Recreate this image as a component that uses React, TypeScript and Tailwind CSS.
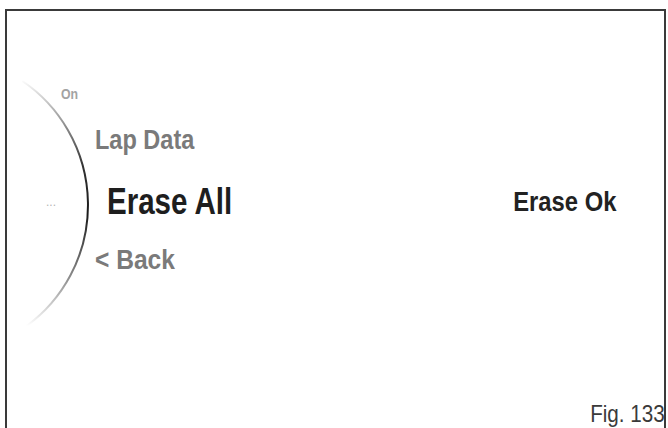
import React from 'react';

const narrow = "font-['Liberation_Sans',Arial,sans-serif]";

// curved selector rail on the left edge of the screen
const MenuArc = () => (
  <svg className="absolute left-0 top-0 pointer-events-none" width="120" height="360" viewBox="0 0 120 360">
    <defs>
      <linearGradient id="arcFade" gradientUnits="userSpaceOnUse" x1="0" y1="68" x2="0" y2="315">
        <stop offset="0" stopColor="#ffffff" />
        <stop offset="0.12" stopColor="#b5b5b5" />
        <stop offset="0.35" stopColor="#333333" />
        <stop offset="0.55" stopColor="#1a1a1a" />
        <stop offset="0.8" stopColor="#8a8a8a" />
        <stop offset="1" stopColor="#ffffff" />
      </linearGradient>
    </defs>
    <path d="M 15.4 70 A 150 150 0 0 1 19.6 315" fill="none" stroke="url(#arcFade)" strokeWidth="2" />
  </svg>
);

export default function App() {
  return (
    <div className="w-[668px] h-[428px] bg-white overflow-hidden pt-[9px] pl-[5px]">
      <div className="relative w-[661px] h-[419px] border-t-2 border-x-2 border-[#3a3a3a] flex flex-col">
        <MenuArc />

        <div className={`flex flex-col items-start pt-[75px] ${narrow} font-bold`}>
          <span className="inline-block origin-left scale-x-[0.82] ml-[54px] text-[15px] leading-none text-[#a3a3a3]">On</span>
          <span className="inline-block origin-left scale-x-[0.84] ml-[88px] mt-[25px] text-[28px] leading-none text-[#7a7a7a]">Lap Data</span>

          <div className="relative w-full mt-[30px] flex items-center justify-between pr-[48px]">
            <span className="absolute left-[39px] top-[12px] text-[12px] leading-none font-normal text-[#b5b5b5]">...</span>
            <span className="inline-block origin-left scale-x-[0.82] ml-[100px] text-[36px] leading-none text-[#1e1e1e]">Erase All</span>
            <span className="inline-block origin-right scale-x-[0.85] text-[28px] leading-none text-[#222]">Erase Ok</span>
          </div>

          <span className="inline-block origin-left scale-x-[0.91] ml-[88px] mt-[27px] text-[27px] leading-none text-[#7a7a7a]">&lt; Back</span>
        </div>

        <div className={`mt-auto mb-[2px] flex justify-end ${narrow}`}>
          <span className="inline-block origin-right scale-x-[0.86] text-[24px] leading-none text-[#3a3a3a] mr-[-1px]">Fig. 133</span>
        </div>
      </div>
    </div>
  );
}
